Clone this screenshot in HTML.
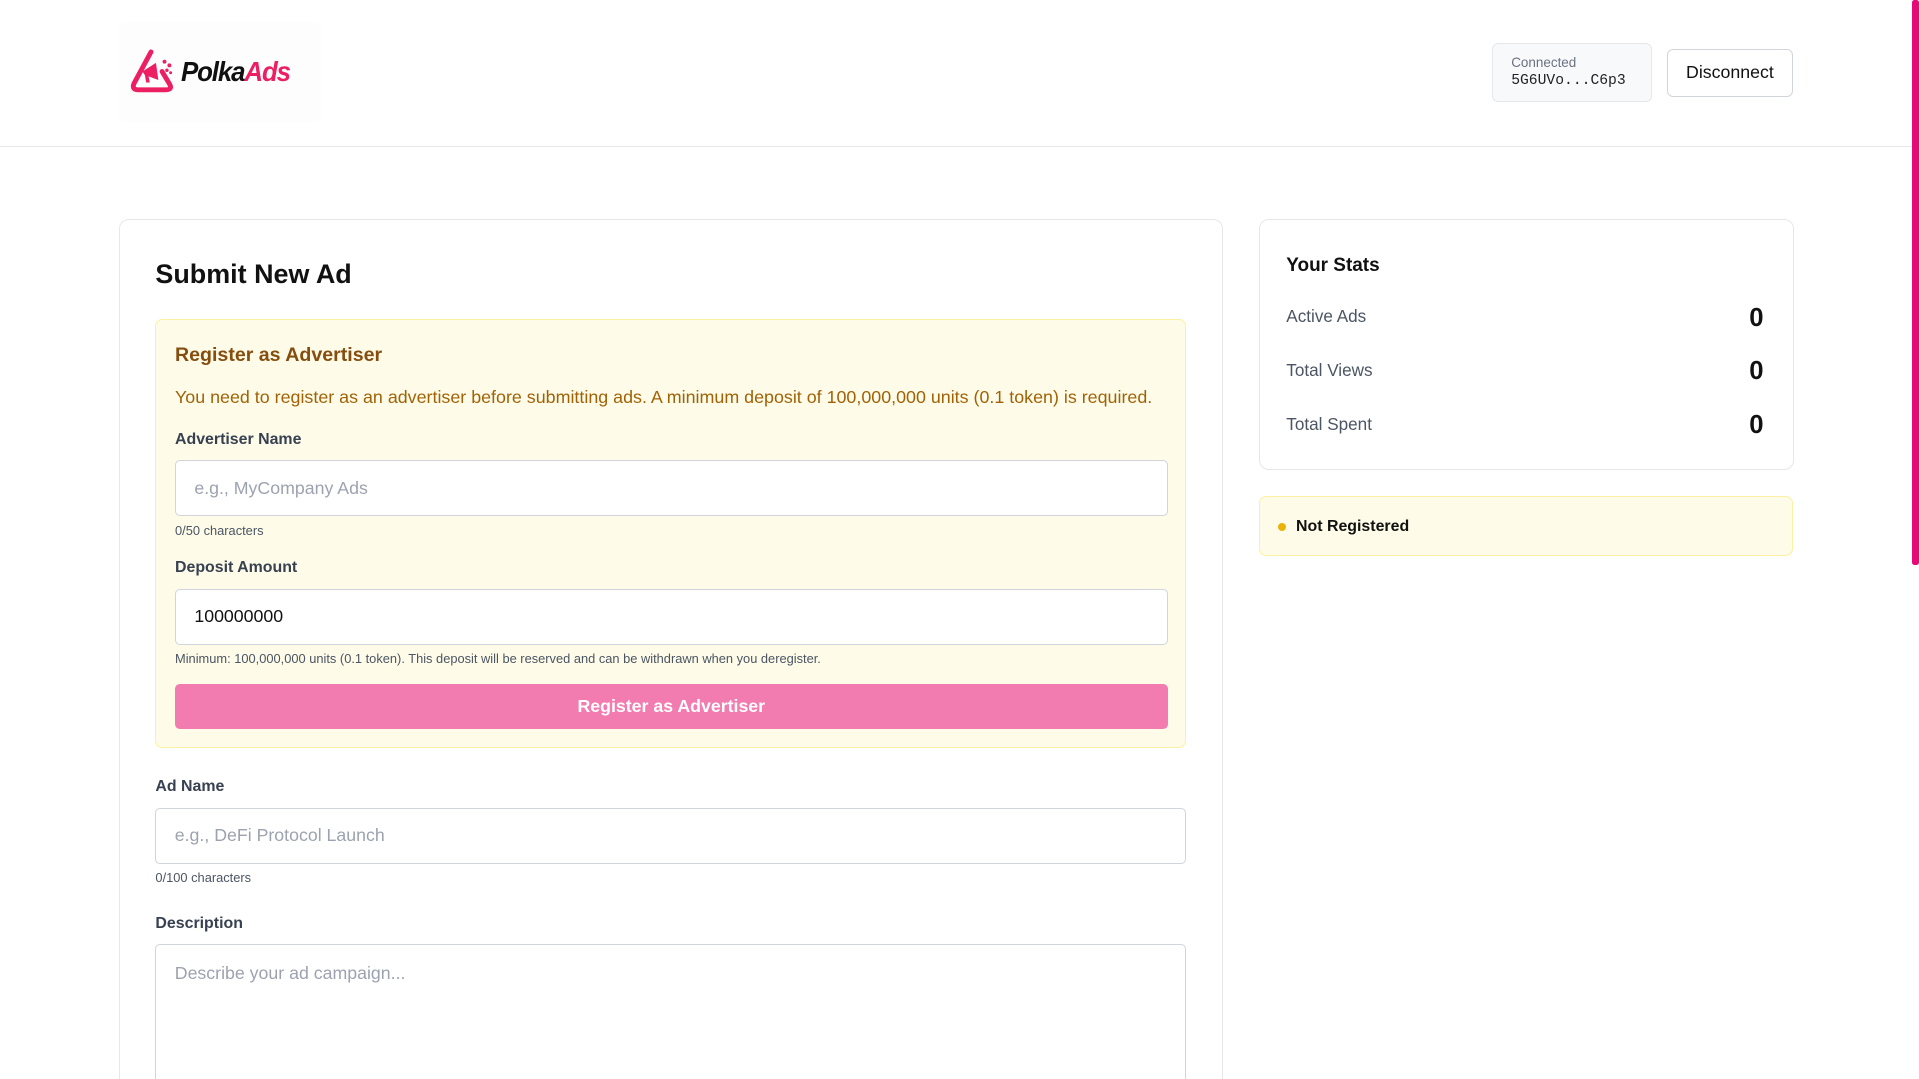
<!DOCTYPE html>
<html><head><meta charset="utf-8"><style>
html{zoom:1.22385;overflow:hidden;height:882px}
body{margin:0;width:1568px;height:882px;overflow:hidden;background:#fff;font-family:"Liberation Sans",sans-serif;position:relative;color:#111}
.a{position:absolute}
.sb{position:absolute;left:1562px;top:0;width:6px;height:462px;background:#e6097a;border-radius:2px}
.hdr{position:absolute;left:0;top:0;width:1562px;height:119px;border-bottom:1px solid #e5e7eb}
.card{position:absolute;border:1px solid #e5e7eb;border-bottom:none;border-radius:8px 8px 0 0;background:#fff}
.lbl{position:absolute;font-size:13px;font-weight:bold;color:#374151}
.inp{position:absolute;border:1px solid #d1d5db;border-radius:4px;background:#fff;box-sizing:border-box;font-size:14.5px;color:#9ca3af;padding-left:15px;display:flex;align-items:center}
.sm{position:absolute;font-size:10.5px;color:#4b5563}
.row{position:absolute;left:1051px;width:390px;font-size:14px;color:#4b5563}
.row b{position:absolute;right:0;top:-2px;font-size:21px;color:#111}
</style></head><body>
<div class="hdr"></div>
<div class="a" style="left:97px;top:18px;width:165px;height:82px;background:#fdfdfe;border-radius:6px"></div>
<svg class="a" style="left:105px;top:38px" width="42" height="38" viewBox="0 0 42 38">
<path d="M18 4 L4 30 Q2 35 8 35 L30 35 Q36 35 33 30 L27 20" fill="none" stroke="#ec1f63" stroke-width="4" stroke-linejoin="round" stroke-linecap="round"/>
<path d="M11 20 L22 13 L24 27 L16 24 L17 29 L14 29 L13 23 Z" fill="#ec1f63"/>
<circle cx="29" cy="12" r="1.6" fill="#ec1f63"/><circle cx="33" cy="15" r="1.6" fill="#ec1f63"/><circle cx="31" cy="19" r="1.4" fill="#ec1f63"/><circle cx="34" cy="21" r="1.2" fill="#ec1f63"/>
</svg>
<div class="a" style="left:148px;top:46px;font-size:23px;font-style:italic;font-weight:bold;letter-spacing:-1px;transform:scaleX(0.92);transform-origin:left"><span style="color:#111">Polka</span><span style="color:#ec1f63">Ads</span></div>
<div class="a" style="left:1219px;top:35px;width:131px;height:48px;background:#f8f9fb;border:1px solid #e5e7eb;border-radius:5px;box-sizing:border-box">
<div class="a" style="left:15px;top:9px;font-size:11px;color:#6b7280">Connected</div>
<div class="a" style="left:15px;top:24px;font-size:12px;font-family:'Liberation Mono',monospace;color:#222">5G6UVo...C6p3</div></div>
<div class="a" style="left:1362px;top:40px;width:103px;height:39px;border:1px solid #d1d5db;border-radius:5px;box-sizing:border-box;font-size:14.5px;display:flex;align-items:center;justify-content:center">Disconnect</div>

<div class="card" style="left:97px;top:179px;width:901px;height:703px"></div>
<div class="a" style="left:127px;top:212px;font-size:22px;font-weight:bold">Submit New Ad</div>
<div class="a" style="left:127px;top:261px;width:842px;height:350px;background:#fefce8;border:1px solid #fdf0a0;border-radius:6px;box-sizing:border-box"></div>
<div class="a" style="left:143px;top:281px;font-size:16px;font-weight:bold;color:#854d0e">Register as Advertiser</div>
<div class="a" style="left:143px;top:316px;font-size:14.6px;color:#a16207">You need to register as an advertiser before submitting ads. A minimum deposit of 100,000,000 units (0.1 token) is required.</div>
<div class="lbl" style="left:143px;top:352px">Advertiser Name</div>
<div class="inp" style="left:143px;top:376px;width:811px;height:46px">e.g., MyCompany Ads</div>
<div class="sm" style="left:143px;top:427px">0/50 characters</div>
<div class="lbl" style="left:143px;top:457px">Deposit Amount</div>
<div class="inp" style="left:143px;top:481px;width:811px;height:46px;color:#111">100000000</div>
<div class="sm" style="left:143px;top:532px">Minimum: 100,000,000 units (0.1 token). This deposit will be reserved and can be withdrawn when you deregister.</div>
<div class="a" style="left:143px;top:559px;width:811px;height:37px;background:#f27bb0;border-radius:4px;color:#fff;font-size:14.5px;font-weight:bold;display:flex;align-items:center;justify-content:center">Register as Advertiser</div>
<div class="lbl" style="left:127px;top:636px">Ad Name</div>
<div class="inp" style="left:127px;top:660px;width:842px;height:46px">e.g., DeFi Protocol Launch</div>
<div class="sm" style="left:127px;top:711px">0/100 characters</div>
<div class="lbl" style="left:127px;top:748px">Description</div>
<div class="inp" style="left:127px;top:771px;width:842px;height:111px;border-bottom:none;border-radius:4px 4px 0 0;align-items:flex-start;padding-top:15px">Describe your ad campaign...</div>

<div class="card" style="left:1029px;top:179px;width:435px;height:203px;border-bottom:1px solid #e5e7eb;border-radius:8px"></div>
<div class="a" style="left:1051px;top:208px;font-size:15.5px;font-weight:bold">Your Stats</div>
<div class="row" style="top:250px">Active Ads<b>0</b></div>
<div class="row" style="top:294px">Total Views<b>0</b></div>
<div class="row" style="top:338px">Total Spent<b>0</b></div>
<div class="a" style="left:1029px;top:405px;width:436px;height:49px;background:#fefce8;border:1px solid #fdf0a0;border-radius:6px;box-sizing:border-box"></div>
<div class="a" style="left:1044px;top:427px;width:7px;height:7px;border-radius:50%;background:#eab308"></div>
<div class="a" style="left:1059px;top:423px;font-size:13px;font-weight:bold">Not Registered</div>
<div class="sb"></div>
</body></html>
